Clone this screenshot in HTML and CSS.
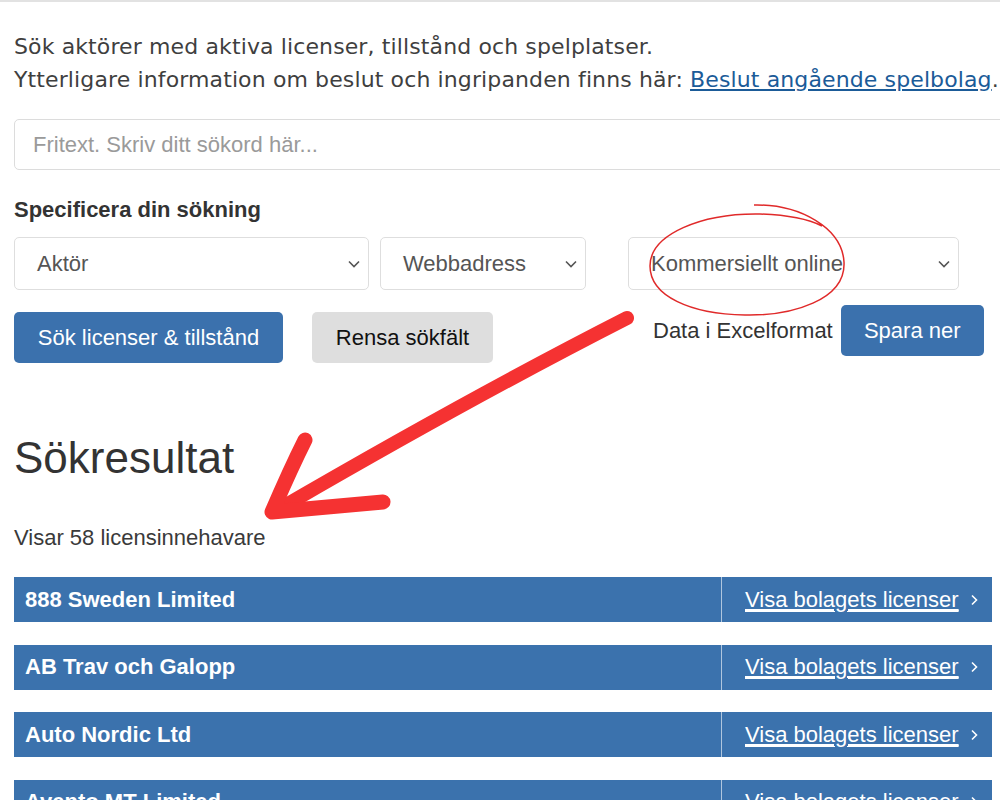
FILE: index.html
```html
<!DOCTYPE html>
<html lang="sv">
<head>
    <meta charset="UTF-8">
    <meta name="viewport" content="width=device-width, initial-scale=1.0">
    <title>Sök licenser och tillstånd</title>
    <link rel="stylesheet" href="styles.css">
</head>
<body>
<div class="topline"></div>
<main class="page">
    <p class="intro">
        Sök aktörer med aktiva licenser, tillstånd och spelplatser.<br>
        Ytterligare information om beslut och ingripanden finns här: <a href="#">Beslut angående spelbolag</a>.
    </p>

    <input type="text" class="search" placeholder="Fritext. Skriv ditt sökord här...">

    <h3 class="filter-title">Specificera din sökning</h3>
    <div class="filters">
        <div class="select select-actor">
            <span>Aktör</span>
            <svg class="chevron" width="12" height="8" viewBox="0 0 12 8"><path d="M1 1.5l5 5 5-5" fill="none" stroke="#555" stroke-width="1.6"/></svg>
        </div>
        <div class="select select-web">
            <span>Webbadress</span>
            <svg class="chevron" width="12" height="8" viewBox="0 0 12 8"><path d="M1 1.5l5 5 5-5" fill="none" stroke="#555" stroke-width="1.6"/></svg>
        </div>
        <div class="select select-type">
            <span>Kommersiellt online</span>
            <svg class="chevron" width="12" height="8" viewBox="0 0 12 8"><path d="M1 1.5l5 5 5-5" fill="none" stroke="#555" stroke-width="1.6"/></svg>
        </div>
    </div>

    <div class="actions">
        <div class="action-buttons">
            <button class="btn btn-primary">Sök licenser &amp; tillstånd</button>
            <button class="btn btn-gray">Rensa sökfält</button>
        </div>
        <div class="export">
            <span>Data i Excelformat</span>
            <button class="btn btn-primary btn-export">Spara ner</button>
        </div>
    </div>

    <h1>Sökresultat</h1>
    <p class="count">Visar 58 licensinnehavare</p>

    <ul class="results">
        <li class="result">
            <span class="result-name">888 Sweden Limited</span>
            <a href="#" class="result-link"><span>Visa bolagets licenser</span>
                <svg width="8" height="12" viewBox="0 0 8 12"><path d="M2 1.5l4.5 4.5-4.5 4.5" fill="none" stroke="#fff" stroke-width="1.6"/></svg></a>
        </li>
        <li class="result">
            <span class="result-name">AB Trav och Galopp</span>
            <a href="#" class="result-link"><span>Visa bolagets licenser</span>
                <svg width="8" height="12" viewBox="0 0 8 12"><path d="M2 1.5l4.5 4.5-4.5 4.5" fill="none" stroke="#fff" stroke-width="1.6"/></svg></a>
        </li>
        <li class="result">
            <span class="result-name">Auto Nordic Ltd</span>
            <a href="#" class="result-link"><span>Visa bolagets licenser</span>
                <svg width="8" height="12" viewBox="0 0 8 12"><path d="M2 1.5l4.5 4.5-4.5 4.5" fill="none" stroke="#fff" stroke-width="1.6"/></svg></a>
        </li>
        <li class="result">
            <span class="result-name">Avento MT Limited</span>
            <a href="#" class="result-link"><span>Visa bolagets licenser</span>
                <svg width="8" height="12" viewBox="0 0 8 12"><path d="M2 1.5l4.5 4.5-4.5 4.5" fill="none" stroke="#fff" stroke-width="1.6"/></svg></a>
        </li>
    </ul>
</main>

<!-- hand drawn markup on top of the screenshot -->
<svg class="annotations" width="1000" height="800" viewBox="0 0 1000 800">
    <path d="M754 205 C800 204, 842 228, 844 262 C846 300, 792 316, 745 315 C690 314, 650 296, 650 266 C650 234, 702 213, 760 214 C790 215, 808 219, 822 226"
          fill="none" stroke="#e02a2a" stroke-width="1.5"/>
    <path d="M627 318 Q 470 398 274 512" fill="none" stroke="#f53232" stroke-width="14" stroke-linecap="round"/>
    <path d="M305 440 Q 290 470 272 512 L 383 502" fill="none" stroke="#f53232" stroke-width="15" stroke-linecap="round" stroke-linejoin="round"/>
</svg>
</body>
</html>
```

FILE: styles.css
```css
* {
    margin: 0;
    padding: 0;
    box-sizing: border-box;
}

body {
    font-family: 'Liberation Sans', Arial, sans-serif;
    font-size: 22px;
    color: #333;
    background-color: #fff;
    width: 1000px;
    height: 800px;
    overflow: hidden;
    position: relative;
}

.topline {
    height: 2px;
    background-color: #e2e2e2;
}

.page {
    padding-left: 14px;
    width: 992px;
}

.intro {
    font-family: 'DejaVu Sans', Verdana, sans-serif;
    font-size: 22px;
    line-height: 33px;
    letter-spacing: 0.12px;
    color: #3f3f3f;
    margin-top: 28px;
    white-space: nowrap;
}

.intro a {
    color: #1b5b98;
}

.search {
    display: block;
    width: 1000px;
    height: 51px;
    margin-top: 23px;
    padding: 0 18px;
    border: 1px solid #dcdcdc;
    border-radius: 5px;
    font-family: 'Liberation Sans', Arial, sans-serif;
    font-size: 22px;
    color: #333;
}

.search::placeholder {
    color: #9a9a9a;
}

.filter-title {
    font-size: 22px;
    font-weight: 700;
    line-height: 33px;
    color: #333;
    margin-top: 23px;
}

.filters {
    display: flex;
    margin-top: 11px;
}

.select {
    height: 53px;
    border: 1px solid #dedede;
    border-radius: 5px;
    display: flex;
    align-items: center;
    justify-content: space-between;
    padding: 0 8px 0 22px;
    color: #555;
    font-size: 22px;
}

.select-actor {
    width: 355px;
}

.select-web {
    width: 206px;
    margin-left: 11px;
}

.select-type {
    width: 331px;
    margin-left: 42px;
}

.actions {
    display: flex;
    align-items: flex-start;
    margin-top: 15px;
}

.action-buttons {
    display: flex;
    gap: 29px;
    margin-top: 7px;
}

.btn {
    height: 51px;
    border: none;
    border-radius: 5px;
    font-family: 'Liberation Sans', Arial, sans-serif;
    font-size: 22px;
    cursor: pointer;
}

.btn-primary {
    background-color: #3b71ad;
    color: #fff;
    width: 269px;
}

.btn-gray {
    background-color: #dedede;
    color: #111;
    width: 181px;
}

.export {
    display: flex;
    align-items: center;
    gap: 8px;
    margin-left: 160px;
    color: #333;
}

.btn-export {
    width: 143px;
}

h1 {
    font-size: 44px;
    font-weight: 400;
    line-height: 48px;
    color: #333;
    margin-top: 71px;
}

.count {
    line-height: 33px;
    color: #3a3a3a;
    margin-top: 39px;
}

.results {
    list-style: none;
    margin-top: 23px;
}

.result {
    display: flex;
    height: 45px;
    background-color: #3b72ad;
    margin-bottom: 22.5px;
    color: #fff;
}

.result-name {
    flex: 1;
    display: flex;
    align-items: center;
    padding-left: 11px;
    font-weight: 700;
}

.result-link {
    width: 271px;
    display: flex;
    align-items: center;
    justify-content: space-between;
    padding: 0 14px 0 23px;
    border-left: 1px solid rgba(255, 255, 255, 0.6);
    color: #fff;
}

.result-link span {
    text-decoration: underline;
    text-underline-offset: 3px;
}

.annotations {
    position: absolute;
    top: 0;
    left: 0;
    pointer-events: none;
}
```
